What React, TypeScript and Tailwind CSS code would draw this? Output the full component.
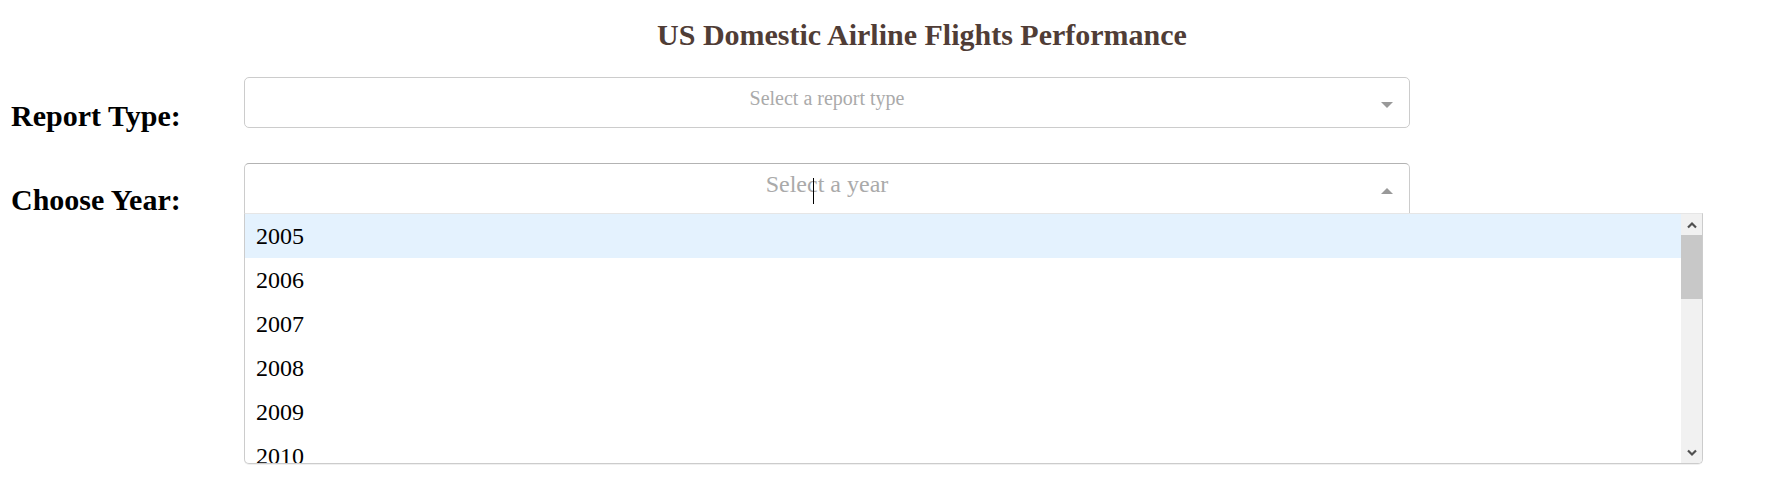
import { useState } from "react";

const years = [2005, 2006, 2007, 2008, 2009, 2010];

const Chevron = ({ up }: { up?: boolean }) => (
  <svg width="12" height="8" viewBox="0 0 12 8" className="block">
    <polyline
      points={up ? "2,6.5 6,2.5 10,6.5" : "2,1.5 6,5.5 10,1.5"}
      fill="none"
      stroke="#505050"
      strokeWidth="2.2"
    />
  </svg>
);

const ScrollBar = () => (
  <div className="w-[21px] bg-[#f1f1f1] flex flex-col">
    <div className="h-[21px] flex items-center justify-center">
      <Chevron up />
    </div>
    <div className="h-[64px] bg-[#c8c8c8]" />
    <div className="flex-1" />
    <div className="h-[21px] flex items-center justify-center">
      <Chevron />
    </div>
  </div>
);

const App = () => {
  const [focused] = useState(2005);
  return (
    <div className="w-full h-[493px] bg-white font-['Liberation_Serif',serif] text-black overflow-hidden">
      <div className="pt-[18px] pl-[61px]">
        <h1 className="text-center text-[30px] leading-[34px] font-bold text-[#503D36]">
          US Domestic Airline Flights Performance
        </h1>
      </div>

      <div className="flex items-start mt-[25px] h-[51px]">
        <div className="w-[244px] pl-[11px] pt-[22px] text-[30px] leading-[34px] font-bold">Report Type:</div>
        <div className="w-[1166px] h-[51px] border border-[#ccc] rounded-[5px] flex items-start pl-[28px]">
          <div className="flex-1 text-center pt-[8px] text-[20px] leading-[24px] text-[#aaa]">
            Select a report type
          </div>
          <div className="w-[28px] h-full flex items-center pt-[4px]">
            <div className="w-0 h-0 border-x-[6px] border-x-transparent border-t-[6px] border-t-[#999]" />
          </div>
        </div>
      </div>

      <div className="flex items-start mt-[35px]">
        <div className="w-[244px] pl-[11px] pt-[20px] text-[30px] leading-[34px] font-bold">Choose Year:</div>
        <div className="relative w-[1166px]">
          <div className="h-[50px] border border-b-0 border-[#ccc] border-t-[#b3b3b3] rounded-t-[5px] flex items-start pl-[28px]">
            <div className="relative flex-1 text-center pt-[6px] text-[24px] leading-[28px] text-[#aaa]">
              Select a year
              <span className="absolute left-[540px] top-[14px] w-px h-[26px] bg-black" />
            </div>
            <div className="w-[28px] h-full flex items-center pt-[5px]">
              <div className="w-0 h-0 border-x-[6px] border-x-transparent border-b-[6px] border-b-[#999]" />
            </div>
          </div>
          <div className="absolute top-full left-0 w-[1459px] h-[251px] bg-white border border-[#ccc] border-t-[#e6e6e6] rounded-b-[5px] shadow-[0_1px_0_rgba(0,0,0,0.06)] flex overflow-hidden">
            <div className="flex-1 overflow-hidden">
              {years.map((y) => (
                <div
                  key={y}
                  className={
                    y === focused
                      ? "h-[44px] pl-[11px] text-[24px] leading-[44px] bg-[#e4f2fe]"
                      : "h-[44px] pl-[11px] text-[24px] leading-[44px]"
                  }
                >
                  {y}
                </div>
              ))}
            </div>
            <ScrollBar />
          </div>
        </div>
      </div>
    </div>
  );
};

export default App;
